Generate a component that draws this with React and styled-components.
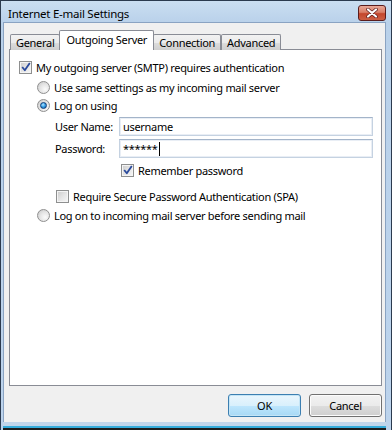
import React from 'react'
import styled, { createGlobalStyle } from 'styled-components'

const GlobalStyle = createGlobalStyle`
    html, body {
        margin: 0;
        padding: 0;
        background: #ffffff;
    }
    body {
        font-family: "Noto Sans", "DejaVu Sans", sans-serif;
        font-size: 11px;
        letter-spacing: -0.3px;
        color: #000000;
    }
`

const Check = ({ checked }) => (
    <CheckBox>
        {checked &&
            <svg width="10" height="10" viewBox="0 0 10 10">
                <path d="M1.2 5 L3.8 8.2 L8.8 0.9" fill="none" stroke="#2a4a9c" strokeWidth="1.8" strokeLinejoin="round" />
            </svg>
        }
    </CheckBox>
)

const App = () => {
    return (
        <>
            <GlobalStyle />
            <Window>
                <TitleBar>
                    <Title>Internet E-mail Settings</Title>
                    <CloseButton>
                        <svg width="12" height="10" viewBox="0 0 12 10">
                            <path d="M2 1.5 L10 8.5 M10 1.5 L2 8.5" stroke="#5a1a1a" strokeWidth="3.6" strokeLinecap="round" />
                            <path d="M2 1.5 L10 8.5 M10 1.5 L2 8.5" stroke="#ffffff" strokeWidth="2.2" strokeLinecap="round" />
                        </svg>
                    </CloseButton>
                </TitleBar>
                <Client>
                    <TabList>
                        <Tab>General</Tab>
                        <Tab $active>Outgoing Server</Tab>
                        <Tab>Connection</Tab>
                        <Tab>Advanced</Tab>
                    </TabList>
                    <Panel>
                        <Row $indent={9}>
                            <Check checked />
                            <span>My outgoing server (SMTP) requires authentication</span>
                        </Row>
                        <Row $indent={27} $mt={2}>
                            <Radio />
                            <span>Use same settings as my incoming mail server</span>
                        </Row>
                        <Row $indent={27}>
                            <Radio $checked />
                            <span>Log on using</span>
                        </Row>
                        <FieldRow $mt={3}>
                            <FieldLabel>User Name:</FieldLabel>
                            <TextBox>username</TextBox>
                        </FieldRow>
                        <FieldRow $mt={3}>
                            <FieldLabel>Password:</FieldLabel>
                            <TextBox>******<Caret /></TextBox>
                        </FieldRow>
                        <Row $indent={111} $mt={3}>
                            <Check checked />
                            <span>Remember password</span>
                        </Row>
                        <Row $indent={46} $mt={8}>
                            <Check />
                            <span>Require Secure Password Authentication (SPA)</span>
                        </Row>
                        <Row $indent={27} $mt={1}>
                            <Radio />
                            <span>Log on to incoming mail server before sending mail</span>
                        </Row>
                    </Panel>
                    <Footer>
                        <Button $default>OK</Button>
                        <Button>Cancel</Button>
                    </Footer>
                </Client>
            </Window>
        </>
    )
}

const Window = styled.div`
    width: 392px;
    height: 430px;
    box-sizing: border-box;
    display: flex;
    flex-direction: column;
    border: 1px solid #2b3a4e;
    border-bottom: none;
    background: linear-gradient(180deg, #cadef1 0px, #b9d1ea 22px, #bcd3ec 100%);
    padding: 0 5px 0 2px;
`

const TitleBar = styled.div`
    height: 21px;
    display: flex;
    align-items: center;
    padding-left: 5px;
`

const Title = styled.div`
    flex: 1;
    font-size: 11.5px;
    letter-spacing: -0.25px;
    color: #000000;
    padding-top: 3px;
`

const CloseButton = styled.div`
    width: 26px;
    height: 14px;
    margin-top: 2px;
    border: 1px solid #5a1c1c;
    border-radius: 3px;
    background: linear-gradient(180deg, #e9a898 0%, #d97f68 45%, #c4462c 55%, #cc5f44 100%);
    display: flex;
    align-items: center;
    justify-content: center;
`

const Client = styled.div`
    flex: 1;
    display: flex;
    flex-direction: column;
    background: #f0f0f0;
    border: 1px solid #8aa3c2;
    border-bottom: none;
    padding: 7px 3px 0 5px;
    box-shadow: 0 4px 0 0 #c1d5ea, 0 6px 0 0 #35acdb, 0 8px 0 0 #1c1c1c;
    margin-bottom: 8px;
`

const TabList = styled.div`
    display: flex;
    align-items: flex-end;
    height: 20px;
    padding-left: 1px;
    position: relative;
    z-index: 1;
`

const Tab = styled.div`
    box-sizing: border-box;
    height: ${p => p.$active ? '20px' : '16px'};
    padding: 0 ${p => p.$active ? '6px' : '5px'};
    margin: 0 ${p => p.$active ? '-1px' : '0'};
    border: 1px solid #898c95;
    border-bottom: none;
    border-radius: 2px 2px 0 0;
    background: ${p => p.$active ? '#ffffff' : 'linear-gradient(180deg, #f2f2f2 0%, #ebebeb 50%, #dddddd 51%, #cfcfcf 100%)'};
    display: flex;
    align-items: ${p => p.$active ? 'flex-start' : 'center'};
    padding-top: ${p => p.$active ? '2px' : '0'};
    line-height: 14px;
    white-space: nowrap;
    position: relative;
    z-index: ${p => p.$active ? 2 : 1};
`

const Panel = styled.div`
    flex: 1;
    margin-top: -1px;
    background: #ffffff;
    border: 1px solid #898c95;
    padding-top: 8px;
    display: flex;
    flex-direction: column;
`

const Row = styled.div`
    display: flex;
    align-items: center;
    gap: 4px;
    height: 18px;
    padding-left: ${p => p.$indent}px;
    margin-top: ${p => p.$mt || 0}px;
    white-space: nowrap;
`

const CheckBox = styled.span`
    width: 13px;
    height: 13px;
    box-sizing: border-box;
    flex-shrink: 0;
    border: 1px solid #8e8f8f;
    display: flex;
    align-items: center;
    justify-content: center;
    box-shadow: inset 0 0 0 1px #f4f4f4;
    background: linear-gradient(135deg, #cbcbcb 0%, #e6e6e6 55%, #f6f6f6 100%);
`

const Radio = styled.span`
    width: 13px;
    height: 13px;
    box-sizing: border-box;
    flex-shrink: 0;
    border-radius: 50%;
    border: 1px solid #8f8f8f;
    background: radial-gradient(circle at 65% 65%, #fbfbfb 0%, #e4e4e4 50%, #c4c4c4 100%);
    display: flex;
    align-items: center;
    justify-content: center;
    &::after {
        content: '';
        display: ${p => p.$checked ? 'block' : 'none'};
        width: 7px;
        height: 7px;
        box-sizing: border-box;
        border-radius: 50%;
        border: 1px solid #0f3d78;
        background: radial-gradient(circle at 40% 35%, #b8e4ff 0%, #3aa3e8 45%, #105aa8 100%);
    }
`

const FieldRow = styled.div`
    display: flex;
    align-items: center;
    padding-left: 45px;
    margin-top: ${p => p.$mt || 0}px;
    padding-right: 8px;
`

const FieldLabel = styled.span`
    width: 64px;
    flex-shrink: 0;
    white-space: nowrap;
`

const TextBox = styled.div`
    flex: 1;
    height: 19px;
    box-sizing: border-box;
    border: 1px solid;
    border-color: #a3b4c9 #c5d2e1 #c5d2e1 #c5d2e1;
    box-shadow: inset 0 0 0 1px #e9eef5;
    background: #ffffff;
    padding: 0 3px;
    display: flex;
    align-items: center;
    line-height: 17px;
`

const Caret = styled.span`
    display: inline-block;
    width: 1px;
    height: 14px;
    background: #000000;
    margin-left: 1px;
`

const Footer = styled.div`
    display: flex;
    justify-content: flex-end;
    gap: 8px;
    padding: 8px 0 5px;
`

const Button = styled.div`
    width: 73px;
    height: 23px;
    box-sizing: border-box;
    border-radius: 3px;
    border: 1px solid ${p => p.$default ? '#3c7fb1' : '#707070'};
    background: ${p => p.$default
        ? 'linear-gradient(180deg, #eaf6fd 0%, #d9f0fc 50%, #bee6fd 51%, #a7d9f5 100%)'
        : 'linear-gradient(180deg, #f2f2f2 0%, #ebebeb 50%, #dddddd 51%, #cfcfcf 100%)'};
    box-shadow: inset 0 0 0 1px ${p => p.$default ? '#c4e5f6' : '#fcfcfc'};
    display: flex;
    align-items: center;
    justify-content: center;
`

export default App
